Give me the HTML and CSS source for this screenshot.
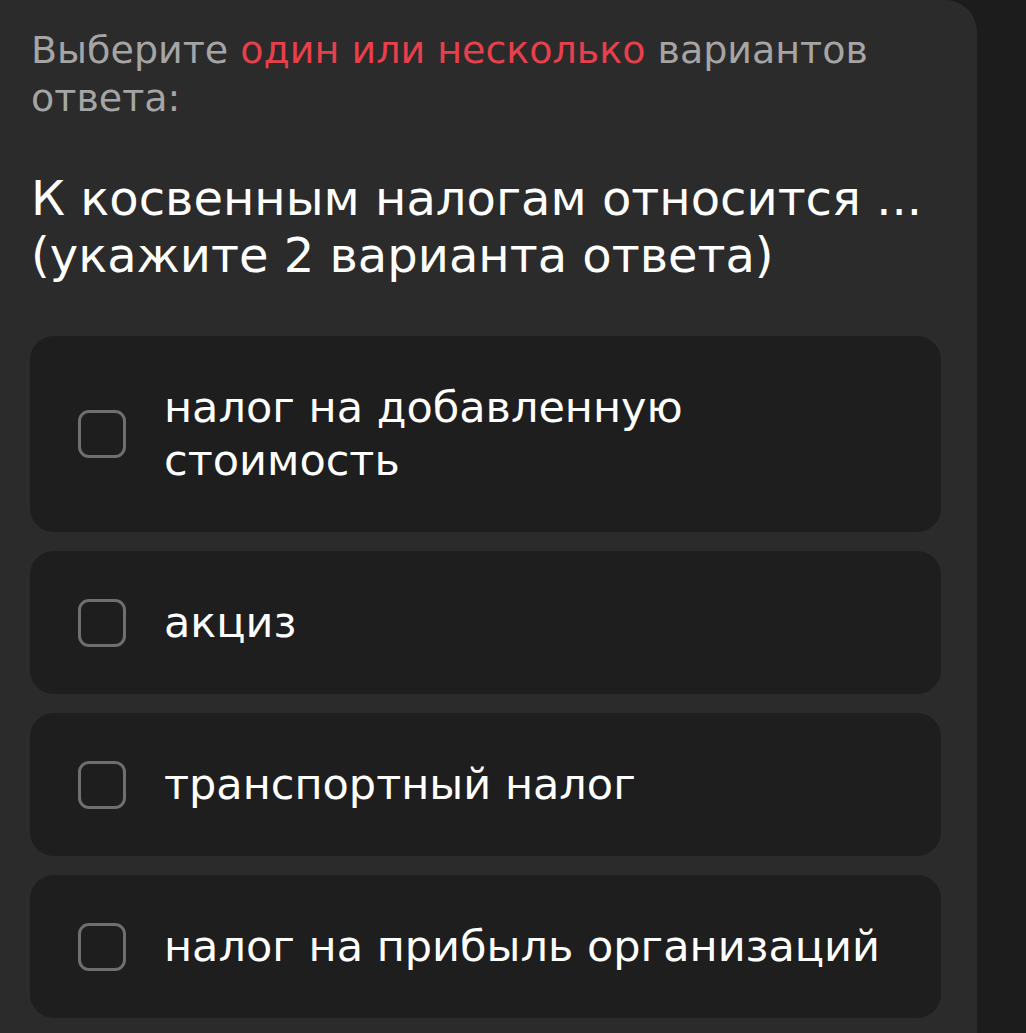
FILE: index.html
```html
<!DOCTYPE html>
<html lang="ru">
<head>
<meta charset="utf-8">
<title>Вопрос</title>
<link rel="stylesheet" href="styles.css">
</head>
<body>
<main class="card">
  <p class="hint">Выберите <span class="hint-accent">один или несколько</span> вариантов ответа:</p>
  <h1 class="question">К косвенным налогам относится ... (укажите 2 варианта ответа)</h1>
  <ul class="options">
    <li class="option"><span class="checkbox"></span><span class="option-text">налог на добавленную<br>стоимость</span></li>
    <li class="option"><span class="checkbox"></span><span class="option-text">акциз</span></li>
    <li class="option"><span class="checkbox"></span><span class="option-text">транспортный налог</span></li>
    <li class="option"><span class="checkbox"></span><span class="option-text">налог на прибыль организаций</span></li>
  </ul>
</main>
</body>
</html>
```

FILE: styles.css
```css
html, body {
  margin: 0;
  padding: 0;
  background: #1c1c1c;
  height: 100%;
  overflow: hidden;
}

body {
  font-family: "DejaVu Sans", "Open Sans", sans-serif;
}

.card {
  width: 977px;
  box-sizing: border-box;
  min-height: 1100px;
  background: #2b2b2b;
  border-top-right-radius: 32px;
  padding: 26px 36px 0 30px;
}

.hint {
  margin: 0 0 0 1px;
  font-size: 38px;
  line-height: 48px;
  font-weight: 400;
  color: #a5a5a5;
}

.hint-accent {
  color: #e8404b;
}

.question {
  margin: 48px 0 0 1px;
  font-size: 48px;
  line-height: 57px;
  font-weight: 400;
  color: #ffffff;
}

.options {
  list-style: none;
  margin: 52px 0 0;
  padding: 0;
  display: flex;
  flex-direction: column;
  gap: 19px;
}

.option {
  display: flex;
  align-items: center;
  gap: 38px;
  background: #1e1e1e;
  border-radius: 24px;
  padding: 45px 30px 45px 48px;
}

.checkbox {
  flex: none;
  width: 48px;
  height: 48px;
  box-sizing: border-box;
  border: 3px solid #6f6f6f;
  border-radius: 11px;
}

.option-text {
  font-size: 43px;
  line-height: 53px;
  color: #ffffff;
}
```
